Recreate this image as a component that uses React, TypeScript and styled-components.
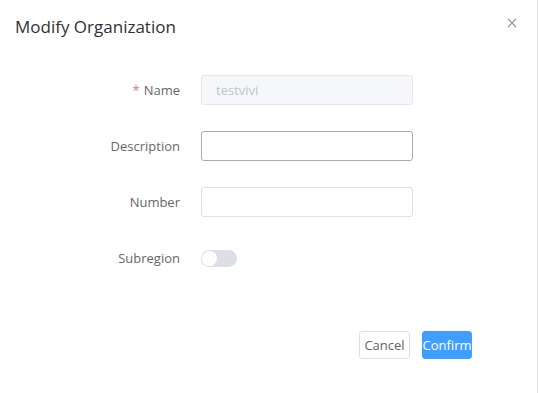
import React from "react";
import styled, { createGlobalStyle } from "styled-components";

const Global = createGlobalStyle`
  html, body { margin: 0; padding: 0; background: #fff; }
  body { font-family: "Open Sans", "Noto Sans", Arial, sans-serif; }
  * { box-sizing: border-box; }
`;

const Dialog = styled.div`
  width: 538px;
  height: 393px;
  background: #fff;
  border-right: 1px solid #dedede;
  display: flex;
  flex-direction: column;
`;

const Header = styled.div`
  display: flex;
  align-items: flex-start;
  justify-content: space-between;
  padding: 15px 20px 0 15px;
  height: 75px;
`;

const Title = styled.div`
  font-size: 17px;
  line-height: 24px;
  color: #303133;
`;

const Close = styled.button`
  border: 0;
  background: none;
  padding: 0;
  margin-top: 3px;
  width: 10px;
  height: 10px;
  cursor: pointer;
  display: flex;
`;

const Form = styled.div`
  display: flex;
  flex-direction: column;
  gap: 26px;
`;

const Row = styled.div`
  display: flex;
  align-items: center;
  height: 30px;
`;

const Label = styled.label`
  width: 201px;
  padding-right: 21px;
  text-align: right;
  font-size: 13px;
  color: #65676c;
`;

const Star = styled.span`
  color: #f56c6c;
  margin-right: 4px;
`;

const Input = styled.input<{ $hover?: boolean }>`
  width: 212px;
  height: 30px;
  border-radius: 3px;
  border: 1px solid ${(p) => (p.$hover ? "#a8abb2" : "#dcdfe6")};
  padding: 0 14px;
  font-family: inherit;
  font-size: 13px;
  color: #606266;
  background: #fff;
  outline: none;
  &:disabled {
    background: #f5f7fa;
    border-color: #e4e7ed;
    color: #c0c4cc;
  }
`;

const Switch = styled.span`
  width: 36px;
  height: 17px;
  border-radius: 9px;
  background: #dcdfe6;
  display: flex;
  align-items: center;
  padding: 1px;
`;

const Knob = styled.span`
  width: 15px;
  height: 15px;
  border-radius: 50%;
  background: #fff;
  display: block;
`;

const Footer = styled.div`
  display: flex;
  justify-content: flex-end;
  gap: 12px;
  padding: 0 65px 0 0;
  margin-top: 58px;
`;

const Button = styled.button<{ $primary?: boolean }>`
  width: ${(p) => (p.$primary ? "50px" : "51px")};
  height: 28px;
  padding: 0;
  border-radius: 3px;
  font-family: inherit;
  font-size: 13px;
  white-space: nowrap;
  display: flex;
  justify-content: center;
  align-items: center;
  overflow: visible;
  border: 1px solid ${(p) => (p.$primary ? "#409eff" : "#dcdfe6")};
  background: ${(p) => (p.$primary ? "#409eff" : "#fff")};
  color: ${(p) => (p.$primary ? "#fff" : "#606266")};
`;

export default function App() {
  return (
    <>
      <Global />
      <Dialog>
        <Header>
          <Title>Modify Organization</Title>
          <Close aria-label="close">
            <svg width="10" height="10" viewBox="0 0 10 10">
              <path d="M1 1L9 9M9 1L1 9" stroke="#909399" strokeWidth="1.1" />
            </svg>
          </Close>
        </Header>
        <Form>
          <Row>
            <Label>
              <Star>*</Star>Name
            </Label>
            <Input disabled value="testvivi" readOnly />
          </Row>
          <Row>
            <Label>Description</Label>
            <Input $hover />
          </Row>
          <Row>
            <Label>Number</Label>
            <Input />
          </Row>
          <Row>
            <Label>Subregion</Label>
            <Switch>
              <Knob />
            </Switch>
          </Row>
        </Form>
        <Footer>
          <Button>Cancel</Button>
          <Button $primary>Confirm</Button>
        </Footer>
      </Dialog>
    </>
  );
}
